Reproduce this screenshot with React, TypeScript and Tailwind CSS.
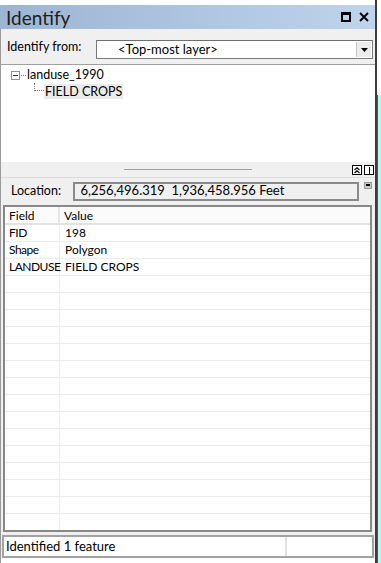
const rows = [
  { field: "FID", value: "198" },
  { field: "Shape", value: "Polygon" },
  { field: "LANDUSE", value: "FIELD CROPS" },
];

const DropArrow = () => (
  <svg width="7" height="4" viewBox="0 0 7 4">
    <path d="M0 0h7L3.5 4z" fill="#000" />
  </svg>
);

const App = () => {
  const empty = Array.from({ length: 15 });

  return (
    <div className="w-[381px] h-[563px] overflow-hidden bg-white flex text-[12.5px] text-black"
      style={{ fontFamily: 'Lato, "Noto Sans", sans-serif' }}>
      <div className="w-[375px] flex flex-col pt-[5px]">
        {/* title bar */}
        <div className="h-[25px] flex items-center justify-between pl-[6px] pr-[6px] bg-gradient-to-r from-[#9db5d3] to-[#bed4ec]">
          <span className="text-[19px] leading-none text-[#1e1e1e] font-normal">Identify</span>
          <div className="flex items-center gap-[8px]">
            <div className="w-[10px] h-[10px] border-[2px] border-black border-t-[3px]" />
            <svg width="10" height="10" viewBox="0 0 10 10">
              <path d="M1 1l8 8M9 1l-8 8" stroke="#000" strokeWidth="1.8" />
            </svg>
          </div>
        </div>

        <div className="flex-1 flex flex-col bg-[#f0f0f0] border-l border-[#9b9b9b]">
          {/* identify from */}
          <div className="h-[33px] flex items-end pb-[3px] pl-[6px] pr-[2px]">
            <span className="w-[89px] pb-[2px]">Identify from:</span>
            <div className="flex-1 h-[19px] bg-white border border-[#7a7a7a] border-t-[#6f6f6f] flex items-center">
              <span className="flex-1 pl-[21px] text-[13px]">&lt;Top-most layer&gt;</span>
              <div className="w-[15px] h-[15px] mr-[1px] bg-[#ececec] border-l border-[#c8c8c8] flex items-center justify-center">
                <DropArrow />
              </div>
            </div>
          </div>

          {/* tree */}
          <div className="h-[98px] mt-[2px] bg-white border-t border-[#a0a0a0] pl-[10px] pt-[3px]">
            <div className="flex items-center h-[15px]">
              <div className="w-[9px] h-[9px] border border-[#919191] flex items-center justify-center">
                <div className="w-[5px] h-px bg-[#333]" />
              </div>
              <div className="w-[5px] border-t border-dotted border-[#777] ml-[1px]" />
              <span className="ml-[1px]">landuse_1990</span>
            </div>
            <div className="flex items-start h-[15px] pl-[23px]">
              <div className="w-[10px] h-[8px] border-l border-b border-dotted border-[#777]" />
              <span className="bg-[#ebebeb] px-[1px] leading-[15px] mt-[1px]">FIELD CROPS</span>
            </div>
          </div>

          {/* splitter */}
          <div className="h-[15px] relative flex items-center">
            <div className="ml-[123px] w-[128px] h-px bg-[#a0a0a0]" />
            <div className="absolute right-[1px] top-[3px] flex gap-[2px]">
              <div className="w-[10px] h-[10px] border border-black bg-white flex items-center justify-center">
                <svg width="6" height="7" viewBox="0 0 6 7">
                  <path d="M0.5 3L3 0.8L5.5 3M0.5 6L3 3.8L5.5 6" stroke="#000" strokeWidth="1.2" fill="none" />
                </svg>
              </div>
              <div className="w-[10px] h-[10px] border border-black bg-white flex items-center justify-center">
                <div className="w-px h-[7px] bg-black" />
              </div>
            </div>
          </div>

          {/* location */}
          <div className="h-[27px] flex items-center pl-[10px] pr-[3px] border-t border-[#dcdcdc]">
            <span className="w-[63px]">Location:</span>
            <div className="w-[288px] h-[19px] border-[2px] border-[#8a8a8a] flex items-center pl-[5px]">
              <span className="text-[13px]">6,256,496.319&nbsp;&nbsp;1,936,458.956 Feet</span>
            </div>
            <div className="ml-[5px] self-start mt-[4px] w-[8px] h-[7px] bg-[#c8c8c8] border border-[#9a9a9a] flex items-start justify-center">
              <div className="w-[4px] h-[2px] bg-black mt-[1px]" />
            </div>
          </div>

          {/* grid */}
          <div className="mx-[2px] mt-[1px] h-[327px] bg-white border-[2px] border-[#898989] overflow-hidden flex flex-col mr-[3px] text-[12px]">
            <div className="h-[18px] flex shrink-0 bg-[#fbfbfb] border-b-[2px] border-[#e2e2e2]">
              <div className="w-[55px] pl-[4px] border-r-[2px] border-[#e6e6e6] leading-[17px]">Field</div>
              <div className="flex-1 pl-[4px] leading-[17px]">Value</div>
            </div>
            {rows.map((r) => (
              <div key={r.field} className="h-[17px] flex shrink-0 border-b border-[#ececec]">
                <div className="w-[55px] pl-[4px] border-r border-[#ececec] leading-[16px] whitespace-nowrap tracking-[-0.5px]">{r.field}</div>
                <div className="flex-1 pl-[5px] leading-[16px]">{r.value}</div>
              </div>
            ))}
            {empty.map((_, i) => (
              <div key={i} className="h-[17px] flex shrink-0 border-b border-[#ececec]">
                <div className="w-[55px] border-r border-[#ececec]" />
                <div className="flex-1" />
              </div>
            ))}
          </div>

          {/* status */}
          <div className="mt-[3px] mx-[1px] h-[23px] bg-white border-[2px] border-[#a2a2a2] flex">
            <div className="w-[283px] pl-[2px] flex items-center border-r-[2px] border-[#e2e2e2]">
              <span className="text-[13px]">Identified 1 feature</span>
            </div>
            <div className="flex-1" />
          </div>
          <div className="h-[5px] bg-white" />
        </div>
      </div>
      {/* screen behind the window */}
      <div className="flex-1 flex">
        <div className="w-[2px] bg-[#3c3c3c]" />
        <div className="flex-1 flex flex-col">
          <div className="h-[95px] bg-white" />
          <div className="flex-1 bg-[#c4f2ee] border-l border-[#555]" />
        </div>
      </div>
    </div>
  );
};

export default App;
